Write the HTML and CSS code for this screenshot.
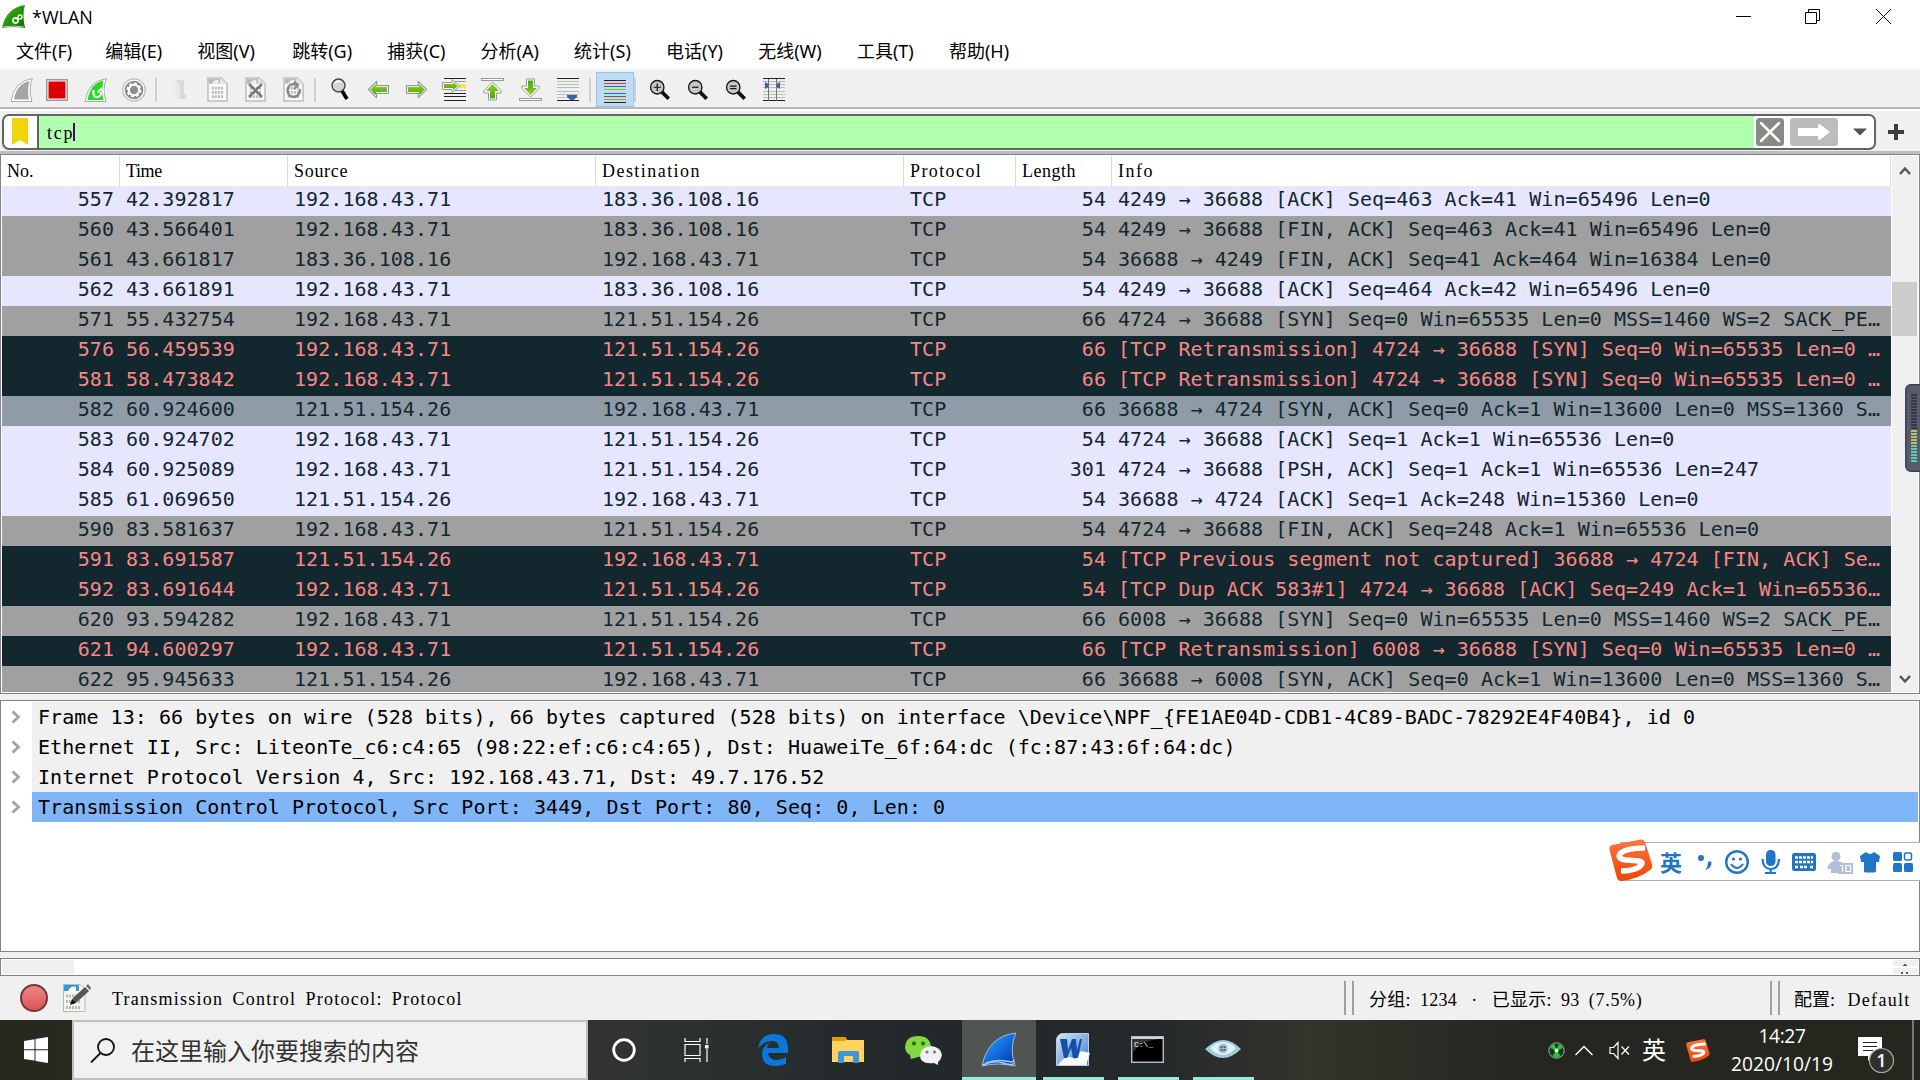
FILE: index.html
```html
<!DOCTYPE html>
<html lang="zh-CN">
<head>
<meta charset="utf-8">
<title>*WLAN</title>
<link rel="stylesheet" href="styles.css">
</head>
<body>
<svg class="defs" width="0" height="0" aria-hidden="true">
  <defs>
    <linearGradient id="green" x1="0" y1="0" x2="0" y2="1"><stop offset="0" stop-color="#8fd01f"/><stop offset="1" stop-color="#4fa60a"/></linearGradient>
    <linearGradient id="fin-green" x1="0" y1="0" x2="1" y2="1"><stop offset="0" stop-color="#3fc010"/><stop offset="1" stop-color="#0b6a0b"/></linearGradient>
    <linearGradient id="fin-blue" x1="0" y1="0" x2="1" y2="1"><stop offset="0" stop-color="#3aa0f8"/><stop offset=".5" stop-color="#1070e0"/><stop offset="1" stop-color="#0a2f9c"/></linearGradient>
    <linearGradient id="orange" x1="0" y1="0" x2="0" y2="1"><stop offset="0" stop-color="#ff7440"/><stop offset="1" stop-color="#ee4408"/></linearGradient>
    <linearGradient id="red" x1="0" y1="0" x2="0" y2="1"><stop offset="0" stop-color="#e98a8a"/><stop offset="1" stop-color="#e05050"/></linearGradient>
    <linearGradient id="word" x1="0" y1="0" x2="1" y2="1"><stop offset="0" stop-color="#d8e8fa"/><stop offset="1" stop-color="#3d78c8"/></linearGradient>
    <symbol id="arrow" viewBox="0 0 24 20"><path d="M1.500 10 L10 1.500 V6 H22.500 V14 H10 V18.500Z" fill="#fff" stroke="#999" stroke-width="1.300" stroke-linejoin="round"/><path d="M4 10 L8.800 5 V8 H20.500 V12 H8.800 V15Z" fill="url(#green)" stroke="url(#green)" stroke-width="1"/></symbol>
    <symbol id="doc" viewBox="0 0 22 26"><path d="M1 1H15L21 7V25H1Z" fill="#fafafa" stroke="#bdbdbd" stroke-width="1.600"/><path d="M2 2H14V7H2Z" fill="#b9b9b9"/><path d="M5 7Q8 2 12 3V7Z" fill="#eee"/><path d="M15 1V7H21Z" fill="#ddd"/><path d="M5 11.500H17M5 16H17M5 20.500H17" stroke="#bbb" stroke-width="3" stroke-dasharray="2.200 1"/></symbol>
    <symbol id="lens" viewBox="0 0 24 24"><path d="M14 14L21.500 21.500" stroke="#111" stroke-width="4"/><circle cx="9" cy="9" r="7.300" fill="#c6c6c6" stroke="#171717" stroke-width="1.500"/></symbol>
    <symbol id="sogou" viewBox="0 0 44 42"><path d="M3 6 L32 .5Q35 0 36 3L43 25Q44 29 41 31Q30 40 12 42Q9 42 8 39L.5 11Q0 7 3 6Z" fill="url(#orange)"/><path d="M36 9Q16 9 11 15Q8 20 17 21L30 22Q36 23 30 28Q24 32 12 32" fill="none" stroke="#fff" stroke-width="5.600"/></symbol>
    <symbol id="chev" viewBox="0 0 10 14"><path d="M1.500 1.500L7.500 7L1.500 12.500" fill="none" stroke="#a2a2a2" stroke-width="2.800"/></symbol>
  </defs>
</svg>

<header class="titlebar">
  <svg class="app-icon" width="24" height="24" viewBox="0 0 24 24"><path d="M0 23Q4 3 23 0Q20 9 23 23Q12 21 0 23Z" fill="url(#fin-green)"/><path d="M1 22Q12 20 22 22" stroke="#b7d8a8" fill="none"/><circle cx="13.500" cy="15.500" r="2.500" fill="none" stroke="#e4f5df" stroke-width="1.800"/><circle cx="18" cy="12" r="2" fill="none" stroke="#e4f5df" stroke-width="1.500"/></svg>
  <span class="title">*WLAN</span>
  <svg class="win-buttons" width="155" height="17" viewBox="0 0 155 17" fill="none" stroke="#000" stroke-width="1"><path d="M0 7.500H15"/><path d="M69.500 3.500H80.500V14.500H69.500ZM72.500 3V.5H83.500V11.500H81"/><path d="M140 0L155 15M155 0L140 15"/></svg>
</header>

<nav class="menubar">
  <span>文件(F)</span><span>编辑(E)</span><span>视图(V)</span><span>跳转(G)</span><span>捕获(C)</span><span>分析(A)</span><span>统计(S)</span><span>电话(Y)</span><span>无线(W)</span><span>工具(T)</span><span>帮助(H)</span>
</nav>

<div class="toolbar">
  <i class="tool"><svg class="fin" width="24" height="26" viewBox="0 0 24 26"><path d="M1 24.500Q4 4 22.500 1.500Q18 12 22 24.500Z" fill="#fff" stroke="#aaa"/><path d="M4 22.500Q6.500 7 19.500 4Q17 13 19 22.500Z" fill="#a5a5a5"/></svg></i>
  <i class="tool"><svg class="stop" width="22" height="22"><rect x=".75" y=".75" width="20.500" height="20.500" fill="#fff" stroke="#999" stroke-width="1.500"/><rect x="2.500" y="2.500" width="17" height="17" fill="#dc0000"/></svg></i>
  <i class="tool"><svg width="24" height="26" viewBox="0 0 24 26"><path d="M1 24.500Q4 4 22.500 1.500Q18 12 22 24.500Z" fill="#fff" stroke="#aaa"/><path d="M3.500 23Q6.500 6 19.500 3.500Q17 13 19.500 23Z" fill="#25dc1b"/><path d="M9.500 13V16Q9.500 20 13 20Q17 20 17 15M13.500 15.500L17 12L20 15.500" fill="none" stroke="#fff" stroke-width="2.200"/></svg></i>
  <i class="tool"><svg width="24" height="24" viewBox="0 0 24 24"><circle cx="12" cy="12" r="11.200" fill="#fff" stroke="#bbb" stroke-width="1.200"/><circle cx="12" cy="12" r="9.300" fill="#8d8d8d"/><circle cx="12" cy="12" r="5.200" fill="none" stroke="#fff" stroke-width="2"/><circle cx="12" cy="12" r="6.700" fill="none" stroke="#fff" stroke-width="1.600" stroke-dasharray="2.800 2.460"/></svg></i>
  <b class="sep"></b>
  <i class="tool"><svg width="16" height="22" viewBox="0 0 16 22"><path d="M1 1H7V21H1Z" fill="#ececec"/><path d="M5 1H13V15L15 16V20H9Z" fill="#d9d9d9"/><path d="M5 1L9 5V20L5 18Z" fill="#e8e8e8"/></svg></i>
  <i class="tool"><svg width="21" height="25"><use href="#doc"/></svg></i>
  <i class="tool"><svg width="21" height="25"><use href="#doc"/><path d="M4 7L17 20M17 7L4 20" stroke="#777" stroke-width="2.500"/></svg></i>
  <i class="tool"><svg width="21" height="25"><use href="#doc"/><path d="M14 8Q6 5 4.500 13Q5 20 11 20Q17 19 17 12M11 5L15 8L11 12" fill="none" stroke="#888" stroke-width="2.400"/></svg></i>
  <b class="sep"></b>
  <i class="tool gap"><svg width="18" height="23" viewBox="0 0 18 23"><path d="M10.500 12L16 21" stroke="#000" stroke-width="3.600"/><circle cx="7.500" cy="7.500" r="6.500" fill="#d5d5d5" stroke="#444" stroke-width="1.400"/><path d="M4 5Q7 2 10 4" stroke="#fff" fill="none" stroke-width="1.500"/></svg></i>
  <i class="tool"><svg width="23" height="19"><use href="#arrow"/></svg></i>
  <i class="tool"><svg class="flip" width="23" height="19"><use href="#arrow"/></svg></i>
  <i class="tool"><svg width="24" height="23" viewBox="0 0 24 23"><path d="M2 .5H24M2 15.500H24M2 18.500H24M2 22.500H24" stroke="#222"/><path d="M12 3.500H24M12 12.500H24" stroke="#999"/><path d="M17 6H24V10H17Z" fill="#ffe24a"/><path d="M.5 4.500H10V1.500L18 8L10 14.500V11.500H.5Z" fill="#fff" stroke="#999"/><path d="M2 6H11V4L16 8L11 12V10H2Z" fill="url(#green)"/></svg></i>
  <i class="tool"><svg width="23" height="23" viewBox="0 0 23 23"><rect x=".5" y=".5" width="22" height="2" fill="#fff" stroke="#999"/><path d="M11.500 4L20 12.500V15H15.500V22H7.500V15H3V12.500Z" fill="#fff" stroke="#999"/><path d="M11.500 6L18 13H14V20.500H9V13H5Z" fill="url(#green)"/></svg></i>
  <i class="tool"><svg class="vflip" width="23" height="23" viewBox="0 0 23 23"><rect x=".5" y=".5" width="22" height="2" fill="#fff" stroke="#999"/><path d="M11.500 4L20 12.500V15H15.500V22H7.500V15H3V12.500Z" fill="#fff" stroke="#999"/><path d="M11.500 6L18 13H14V20.500H9V13H5Z" fill="url(#green)"/></svg></i>
  <i class="tool"><svg width="22" height="23" viewBox="0 0 22 23"><path d="M0 .5H22M0 22.500H22" stroke="#222"/><path d="M0 3.500H22M0 6.500H22M0 9.500H22M0 13.500H22M0 16.500H22M0 19.500H22" stroke="#babdb6"/><path d="M10 17H20V19L16.500 22H13.500L10 19Z" fill="#3465a4"/></svg></i>
  <b class="sep wide"></b>
  <i class="tool checked"><svg width="22" height="23" viewBox="0 0 22 23" shape-rendering="crispEdges"><path d="M0 .5H22M0 22.500H22" stroke="#222"/><path d="M0 3.500H22" stroke="#ef2929"/><path d="M0 6.500H22M0 13.500H22" stroke="#3465a4"/><path d="M0 9.500H22" stroke="#73d216"/><path d="M0 16.500H22" stroke="#75507b"/><path d="M0 19.500H22" stroke="#c4a000"/></svg></i>
  <b class="sep last"></b>
  <i class="tool"><svg width="22" height="22" viewBox="0 0 24 24"><use href="#lens"/><path d="M5 9H13M9 5V13" stroke="#111" stroke-width="1.300"/></svg></i>
  <i class="tool"><svg width="22" height="22" viewBox="0 0 24 24"><use href="#lens"/><path d="M5.500 9H12.500" stroke="#111" stroke-width="1.300"/></svg></i>
  <i class="tool"><svg width="22" height="22" viewBox="0 0 24 24"><use href="#lens"/><path d="M5.500 7.800H12.500M5.500 10.500H12.500" stroke="#111" stroke-width="1.200"/></svg></i>
  <i class="tool"><svg width="22" height="23" viewBox="0 0 22 23"><path d="M0 .5H22M0 22.500H22" stroke="#222"/><path d="M0 3.500H22M0 6.500H22M0 9.500H22M0 13.500H22M0 16.500H22M0 19.500H22" stroke="#babdb6"/><path d="M5.500 1V23M13.500 1V23" stroke="#777"/><path d="M2 4L5.500 6V9L2 11ZM17 4L13.500 6V9L17 11Z" fill="#3465a4"/></svg></i>
</div>

<div class="filterbar">
  <div class="filterbox">
    <div class="bookmark"><svg width="16" height="28"><path d="M0 1Q0 0 1 0H15Q16 0 16 1V27L8 22L0 27Z" fill="#efd509"/></svg></div>
    <div class="filter-input"><span class="serif tcp">tcp</span><span class="caret"></span></div>
    <svg class="fbtn" width="28" height="28"><rect width="28" height="28" rx="3.500" fill="#888a85"/><path d="M5 5L23 23M23 5L5 23" stroke="#fff" stroke-width="2.500" stroke-linecap="round"/></svg>
    <svg class="fbtn apply" width="48" height="28"><rect width="48" height="28" rx="3.500" fill="#bcbcbc"/><path d="M9 10H28V7Q29 5 31 7L40 14L31 21Q29 23 28 21V18H9Q8 18 8 17V11Q8 10 9 10Z" fill="#fff"/></svg>
    <svg class="drop" width="14" height="8"><path d="M0 .5H14L7 7.500Z" fill="#555"/></svg>
  </div>
  <svg class="plus" width="16" height="16"><path d="M8 0V16M0 8H16" stroke="#3d3d3d" stroke-width="4"/></svg>
</div>

<section class="packets">
  <div class="list">
    <div class="row head serif"><span class="h3">No.</span><span class="h4">Time</span><span class="h6">Source</span><span class="h11">Destination</span><span class="h8">Protocol</span><span class="hl">Length</span><span class="hi">Info</span></div>
    <div class="row tcp-row"><span>557</span><span>42.392817</span><span>192.168.43.71</span><span>183.36.108.16</span><span>TCP</span><span>54</span><span>4249 → 36688 [ACK] Seq=463 Ack=41 Win=65496 Len=0</span></div>
    <div class="row syn"><span>560</span><span>43.566401</span><span>192.168.43.71</span><span>183.36.108.16</span><span>TCP</span><span>54</span><span>4249 → 36688 [FIN, ACK] Seq=463 Ack=41 Win=65496 Len=0</span></div>
    <div class="row syn"><span>561</span><span>43.661817</span><span>183.36.108.16</span><span>192.168.43.71</span><span>TCP</span><span>54</span><span>36688 → 4249 [FIN, ACK] Seq=41 Ack=464 Win=16384 Len=0</span></div>
    <div class="row tcp-row"><span>562</span><span>43.661891</span><span>192.168.43.71</span><span>183.36.108.16</span><span>TCP</span><span>54</span><span>4249 → 36688 [ACK] Seq=464 Ack=42 Win=65496 Len=0</span></div>
    <div class="row syn"><span>571</span><span>55.432754</span><span>192.168.43.71</span><span>121.51.154.26</span><span>TCP</span><span>66</span><span>4724 → 36688 [SYN] Seq=0 Win=65535 Len=0 MSS=1460 WS=2 SACK_PE…</span></div>
    <div class="row bad"><span>576</span><span>56.459539</span><span>192.168.43.71</span><span>121.51.154.26</span><span>TCP</span><span>66</span><span>[TCP Retransmission] 4724 → 36688 [SYN] Seq=0 Win=65535 Len=0 …</span></div>
    <div class="row bad"><span>581</span><span>58.473842</span><span>192.168.43.71</span><span>121.51.154.26</span><span>TCP</span><span>66</span><span>[TCP Retransmission] 4724 → 36688 [SYN] Seq=0 Win=65535 Len=0 …</span></div>
    <div class="row hover"><span>582</span><span>60.924600</span><span>121.51.154.26</span><span>192.168.43.71</span><span>TCP</span><span>66</span><span>36688 → 4724 [SYN, ACK] Seq=0 Ack=1 Win=13600 Len=0 MSS=1360 S…</span></div>
    <div class="row tcp-row"><span>583</span><span>60.924702</span><span>192.168.43.71</span><span>121.51.154.26</span><span>TCP</span><span>54</span><span>4724 → 36688 [ACK] Seq=1 Ack=1 Win=65536 Len=0</span></div>
    <div class="row tcp-row"><span>584</span><span>60.925089</span><span>192.168.43.71</span><span>121.51.154.26</span><span>TCP</span><span>301</span><span>4724 → 36688 [PSH, ACK] Seq=1 Ack=1 Win=65536 Len=247</span></div>
    <div class="row tcp-row"><span>585</span><span>61.069650</span><span>121.51.154.26</span><span>192.168.43.71</span><span>TCP</span><span>54</span><span>36688 → 4724 [ACK] Seq=1 Ack=248 Win=15360 Len=0</span></div>
    <div class="row syn"><span>590</span><span>83.581637</span><span>192.168.43.71</span><span>121.51.154.26</span><span>TCP</span><span>54</span><span>4724 → 36688 [FIN, ACK] Seq=248 Ack=1 Win=65536 Len=0</span></div>
    <div class="row bad"><span>591</span><span>83.691587</span><span>121.51.154.26</span><span>192.168.43.71</span><span>TCP</span><span>54</span><span>[TCP Previous segment not captured] 36688 → 4724 [FIN, ACK] Se…</span></div>
    <div class="row bad"><span>592</span><span>83.691644</span><span>192.168.43.71</span><span>121.51.154.26</span><span>TCP</span><span>54</span><span>[TCP Dup ACK 583#1] 4724 → 36688 [ACK] Seq=249 Ack=1 Win=65536…</span></div>
    <div class="row syn"><span>620</span><span>93.594282</span><span>192.168.43.71</span><span>121.51.154.26</span><span>TCP</span><span>66</span><span>6008 → 36688 [SYN] Seq=0 Win=65535 Len=0 MSS=1460 WS=2 SACK_PE…</span></div>
    <div class="row bad"><span>621</span><span>94.600297</span><span>192.168.43.71</span><span>121.51.154.26</span><span>TCP</span><span>66</span><span>[TCP Retransmission] 6008 → 36688 [SYN] Seq=0 Win=65535 Len=0 …</span></div>
    <div class="row syn"><span>622</span><span>95.945633</span><span>121.51.154.26</span><span>192.168.43.71</span><span>TCP</span><span>66</span><span>36688 → 6008 [SYN, ACK] Seq=0 Ack=1 Win=13600 Len=0 MSS=1360 S…</span></div>
  </div>
  <div class="scrollbar">
    <svg width="12" height="9"><path d="M1 8L6 2.500L11 8" fill="none" stroke="#555" stroke-width="2.500"/></svg>
    <div class="thumb"></div>
    <svg class="down" width="12" height="9"><path d="M1 1L6 6.500L11 1" fill="none" stroke="#555" stroke-width="2.500"/></svg>
  </div>
</section>

<section class="details">
  <div class="node"><i><svg width="10" height="14"><use href="#chev"/></svg></i><span>Frame 13: 66 bytes on wire (528 bits), 66 bytes captured (528 bits) on interface \Device\NPF_{FE1AE04D-CDB1-4C89-BADC-78292E4F40B4}, id 0</span></div>
  <div class="node"><i><svg width="10" height="14"><use href="#chev"/></svg></i><span>Ethernet II, Src: LiteonTe_c6:c4:65 (98:22:ef:c6:c4:65), Dst: HuaweiTe_6f:64:dc (fc:87:43:6f:64:dc)</span></div>
  <div class="node"><i><svg width="10" height="14"><use href="#chev"/></svg></i><span>Internet Protocol Version 4, Src: 192.168.43.71, Dst: 49.7.176.52</span></div>
  <div class="node selected"><i><svg width="10" height="14"><use href="#chev"/></svg></i><span>Transmission Control Protocol, Src Port: 3449, Dst Port: 80, Seq: 0, Len: 0</span></div>
</section>

<section class="bytes"><div class="offset"></div><svg width="25" height="14"><path d="M0 0H25V6H0ZM0 8H25V14H0Z" fill="#efefef"/><path d="M10 6V5H11V4H13V5H14V6ZM8 12H10V14H8ZM13 12H15V14H13Z" fill="#555"/></svg></section>

<footer class="statusbar">
  <svg class="expert" width="28" height="28"><circle cx="14" cy="14" r="13" fill="url(#red)" stroke="#74393c" stroke-width="2"/></svg>
  <svg class="comment" width="28" height="28" viewBox="0 0 28 28"><path d="M.5.5H17L22 5V27.500H.5Z" fill="#f5f5ee" stroke="#b9b9a9"/><path d="M1 1H16V7H1Z" fill="#2b9bd8"/><path d="M5 7Q8 1 13 3V7Z" fill="#fff"/><path d="M3 12H18M3 17.500H18M3 23.500H18" stroke="#b7b7ae" stroke-width="3" stroke-dasharray="2 1"/><path d="M8 20L10 14L22 3L26 7L14 18Z" fill="#555"/><path d="M23 2L25 0L28 4L27 6Z" fill="#666"/><path d="M7 21L9 15L13 19Z" fill="#111"/></svg>
  <span class="serif status-text">Transmission Control Protocol: Protocol</span>
  <b class="grip"></b>
  <span class="serif packets-count">分组: <em>1234</em> <em class="dot">·</em> 已显示: <em>93</em> <em class="pct">(7.5%)</em></span>
  <b class="grip"></b>
  <span class="serif profile">配置: <em>Default</em></span>
</footer>

<footer class="taskbar">
  <div class="start"><svg width="24" height="26" viewBox="0 0 24 26" fill="#fff"><path d="M0 4L10.500 2.300V12.300H0ZM11.500 2L24 0V12.300H11.500ZM0 13.300H10.500V23.500L0 22ZM11.500 13.300H24V26L11.500 24Z"/></svg></div>
  <div class="search"><svg width="25" height="25" viewBox="0 0 25 25" fill="none" stroke="#111" stroke-width="1.800"><circle cx="16" cy="9" r="8"/><path d="M10.500 15L1 24.500"/></svg><span>在这里输入你要搜索的内容</span></div>
  <div class="task cortana"><svg width="24" height="24"><circle cx="12" cy="12" r="10.300" fill="none" stroke="#fff" stroke-width="2.800"/></svg></div>
  <div class="task view"><svg width="26" height="24" fill="none" stroke="#fff" stroke-width="1.200"><path d="M1 0V3.500H16V0M1 24V20.500H16V24M1 6.500H16V17.500H1ZM23 0V6M23 11V24"/><path d="M21 7H24.500V10.500H21Z" fill="#fff" stroke="none"/></svg></div>
  <div class="task edge"><svg width="32" height="34" viewBox="0 0 32 34"><path d="M1 16Q3 1 17 1Q31 1 31 16V20H11Q12 27 20 27Q25 27 29 24V31Q24 33 18 33Q5 33 5 21Q5 14 13 9Q10 12 10 15H22Q22 8 15 8Q6 8 1 16Z" fill="#0a78d7"/></svg></div>
  <div class="task explorer"><svg width="32" height="28" viewBox="0 0 32 28"><path d="M0 1H13L15 4H32V26H0Z" fill="#ffd262"/><path d="M0 1H13L15 3L13 5H0Z" fill="#df9c05"/><path d="M6 27V17Q6 15 8 15H25Q27 15 27 17V27H21V20H12V27Z" fill="#3b96dc"/></svg></div>
  <div class="task wechat"><svg width="38" height="30" viewBox="0 0 38 30"><path d="M13 1Q25 1 26 12Q25 21 13 22L6 24L5 20Q0 17 0 12Q1 1 13 1Z" fill="#83d93f"/><circle cx="9" cy="8.500" r="2" fill="#147115"/><circle cx="18" cy="8.500" r="2" fill="#147115"/><path d="M26 11Q36 12 37 20Q36 25 33 27V30L29 28Q15 30 15 20Q16 12 26 11Z" fill="#eef0f1"/><circle cx="22" cy="17" r="1.500" fill="#777"/><circle cx="29.500" cy="17" r="1.500" fill="#777"/></svg></div>
  <div class="task app active"><svg width="36" height="36" viewBox="0 0 36 36"><path d="M1 34Q7 4 35 1Q28 15 34 34Q16 30 1 34Z" fill="url(#fin-blue)" stroke="#aab9cf" stroke-width="1"/><path d="M2 33Q12 28 22 31T33 31M5 31Q15 27 24 29T33 28" stroke="#a9cbf5" fill="none" stroke-width="1.400"/></svg></div>
  <div class="task app word"><svg width="35" height="34" viewBox="0 0 35 34"><path d="M.5 6Q2 .5 7 .5H32.500V32.500H.5Z" fill="url(#word)" stroke="#b8cdec"/><path d="M2 32Q10 20 19 26L25 18L34 20L31 29V32Z" fill="#f7f9fc"/><path d="M4 6H11L12 17L16 6H20L21 17L24 6H26L22 25H17L15 15L11 25H8Z" fill="#1450aa"/></svg></div>
  <div class="task app cmd"><svg width="33" height="27" viewBox="0 0 33 27"><rect x=".7" y=".7" width="31.600" height="25.600" fill="#000" stroke="#b6bcc2" stroke-width="1.500"/><path d="M1 1H32V3H1Z" fill="#cfd6de"/><path d="M1.500 3H28Q12 4 2 16Z" fill="#333"/><text x="3" y="11">C:\_</text></svg></div>
  <div class="task app eye"><svg width="36" height="19" viewBox="0 0 36 19"><path d="M0 9Q10 0 18 0Q27 0 36 9Q27 18 18 18Q9 18 0 9Z" fill="#9ccbdd"/><path d="M5 8Q11 2 18 2Q26 2 31 8Q25 15 18 15Q11 15 5 8Z" fill="#e4f2f5"/><circle cx="18" cy="8.500" r="5" fill="#a9cbd6"/><circle cx="18" cy="8.500" r="3" fill="#476876"/><path d="M18 3V14M12.500 8.500H23.500" stroke="#b7d3dc" stroke-width=".8"/></svg></div>
  <div class="tray">
    <svg class="t-green" width="17" height="17" viewBox="0 0 17 17"><circle cx="8.500" cy="8.500" r="7.700" fill="#123c17" stroke="#a5ada5"/><path d="M8.500 8.500L2.200 6Q4 2 6.500 2ZM8.500 8.500L10.500 2Q14 3 15 6ZM8.500 8.500L12.500 14Q8.500 17 4.500 14Z" fill="#22c83c"/><circle cx="8.500" cy="8.500" r="2" fill="#fff"/></svg>
    <svg class="t-up" width="18" height="11" fill="none" stroke="#fff" stroke-width="1.500"><path d="M.5 10L9 1.500L17.500 10"/></svg>
    <svg class="t-vol" width="21" height="19" fill="none" stroke="#fff" stroke-width="1.200"><path d="M1 6.500H4.500L9 1.500V17.500L4.500 12.500H1ZM12.500 5.500L20 13.500M20 5.500L12.500 13.500"/></svg>
    <span class="t-lang">英</span>
    <svg class="t-sogou" width="24" height="23"><use href="#sogou"/></svg>
    <div class="clock"><span>14:27</span><span>2020/10/19</span></div>
    <svg class="t-note" width="38" height="38" viewBox="0 0 38 38"><path d="M1 1H25V20H16L11 25V20H1Z" fill="#fff"/><path d="M6 6.500H20M6 10.500H20M6 14.500H16" stroke="#222" stroke-width="1.200"/><circle cx="24.500" cy="24.500" r="12" fill="#30312e" stroke="#aaa" stroke-width="1.200"/><text x="24.500" y="31" text-anchor="middle">1</text></svg>
    <b class="peek"></b>
  </div>
</footer>

<aside class="ime">
  <svg class="ime-logo" width="44" height="42"><use href="#sogou"/></svg>
  <span class="ime-lang">英</span>
  <svg width="300" height="37" viewBox="1620 843 300 37" fill="#2075c7" class="ime-icons">
    <circle cx="1701" cy="858" r="3"/><path d="M1708 862Q1712 860 1711.500 864Q1710 869 1705 870Q1708 867 1708 862Z"/>
    <circle cx="1737" cy="862" r="10.800" fill="none" stroke="#2075c7" stroke-width="2.400"/><circle cx="1733.500" cy="859" r="1.600"/><circle cx="1740.500" cy="859" r="1.600"/><path d="M1731 864Q1737 872 1743 864" fill="none" stroke="#2075c7" stroke-width="2"/>
    <rect x="1766" y="850" width="9.500" height="16" rx="4.500"/><path d="M1762.500 859Q1763 869 1770.700 869Q1778.500 869 1779 859M1770.700 869V872M1765 873H1776" fill="none" stroke="#2075c7" stroke-width="2.200"/>
    <rect x="1792" y="853" width="24" height="18" rx="2.500"/><path d="M1795 857.500H1813M1795 862H1813M1795 867H1798M1800 867H1808M1810 867H1813" stroke="#fff" stroke-width="2.500" stroke-dasharray="3 1"/>
    <g fill="#b1bfd6"><circle cx="1836" cy="856.500" r="4.500"/><path d="M1827 869Q1829 861 1836 861Q1842 861 1843 864H1838V873H1831V869Z"/><path d="M1838 863H1853V874H1838Z"/></g><path d="M1840 865.500H1842.500V872M1846 865.500H1850.500V871.500H1846Z" stroke="#fff" stroke-width="1.200" fill="none"/>
    <path d="M1866 852L1860 856L1861 862H1864V871Q1864 872.500 1866 872.500H1874Q1876 872.500 1876 871V862H1879L1880 856L1874 852Q1870 856 1866 852Z"/>
    <rect x="1893" y="852" width="9" height="9" rx="1.500"/><rect x="1904.500" y="853" width="7" height="7" rx="1.500" fill="none" stroke="#2075c7" stroke-width="1.500"/><rect x="1893" y="863" width="9" height="9" rx="1.500"/><rect x="1904" y="863" width="9" height="9" rx="1.500"/>
  </svg>
</aside>

<svg class="meter" width="15" height="88"><rect x=".8" y=".8" width="24" height="86.400" rx="5" fill="#575b6b" stroke="#3c404e" stroke-width="1.500"/><path d="M9 10V46" stroke="#343846" stroke-width="6" stroke-dasharray="2 1"/><path d="M9 46V61" stroke="#b3c36b" stroke-width="6" stroke-dasharray="2 1"/><path d="M9 61V78" stroke="#61c9ac" stroke-width="6" stroke-dasharray="2 1"/></svg>
</body>
</html>
```
FILE: styles.css
```css
* { box-sizing: border-box; }
body {
  margin: 0;
  width: 1920px;
  height: 1080px;
  overflow: hidden;
  position: relative;
  display: flex;
  flex-direction: column;
  background: #f0f0f0;
  color: #000;
  font-family: "Open Sans", "Noto Sans CJK SC", sans-serif;
}
body > * { flex-shrink: 0; }
svg { display: block; flex-shrink: 0; }
.defs { position: absolute; }
.serif { font-family: "Liberation Serif", "Noto Sans CJK SC", serif; font-size: 18px; }
em { font-style: normal; }

/* title and menu */
.titlebar { height: 34px; background: #fff; display: flex; align-items: flex-start; padding: 5px 0 0 2px; }
.title { font-size: 18px; line-height: 24px; margin-left: 6px; }
.win-buttons { margin: 4px 29px 0 auto; overflow: visible; }
.menubar { height: 37px; background: #fff; border-bottom: 2px solid #f2f2f2; display: flex; gap: 35.200px; padding-left: 16px; font-family: "Noto Sans", "Noto Sans CJK SC", sans-serif; font-size: 18px; line-height: 35px; white-space: nowrap; }
.menubar span:first-child { margin-right: -2px; }
.menubar span:nth-child(3) { margin-right: 2px; }

/* toolbar */
.toolbar { height: 38px; border-bottom: 2px solid #b8b8b8; display: flex; align-items: center; padding: 1px 0 0 1px; }
.tool { width: 38px; height: 35px; display: flex; align-items: center; justify-content: center; flex-shrink: 0; }
.tool.gap { margin-left: 2px; }
.fin { margin-left: 4px; }
.stop { margin-right: 3px; }
.flip { transform: scaleX(-1); }
.vflip { transform: scaleY(-1); }
.checked { background: #c0dcf3; border: 1px solid #90c8f6; padding: 4px 0 0; }
.sep { width: 7px; height: 24px; border-left: 2px solid #cfcfcf; margin-left: 2px; margin-right: -2px; }
.sep.wide { width: 7px; margin-left: 2px; margin-right: 0; }
.sep.last { width: 7px; margin: 0; }

/* display filter */
.filterbar { height: 45px; border-top: 2px solid #fff; border-bottom: 3px solid #bcbcbc; display: flex; padding: 3px 0 0 2px; align-items: flex-start; }
.filterbox { width: 1874px; height: 36px; border: 2px solid #646466; border-radius: 7px; background: #fff; display: flex; align-items: center; overflow: hidden; }
.bookmark { width: 35px; height: 32px; border-right: 2px solid #646466; padding: 2px 0 0 8px; }
.filter-input { width: 1715px; height: 32px; background: #afffaf; display: flex; align-items: center; padding-left: 8px; }
.tcp { letter-spacing: 1.700px; margin-top: 2px; }
.caret { width: 2px; height: 18px; background: #500050; margin-left: -1px; }
.fbtn { margin-left: 2px; }
.apply { margin-left: 6px; }
.drop { margin-left: 15px; }
.plus { margin: 10px 0 0 12px; }

/* packet list */
.packets { height: 540px; border: 1px solid #82828c; display: flex; padding: 1px; background: #fff; }
.list { width: 1890px; overflow: hidden; }
.row {
  display: grid;
  grid-template-columns: 117px 168px 308px 308px 112px 96px 1fr;
  height: 30px;
  line-height: 26px;
  white-space: pre;
}
.row, .node { font-family: "DejaVu Sans Mono", monospace; font-size: 20px; letter-spacing: .055px; }
.row > span { padding-left: 7px; }
.row:not(.head) > span:nth-child(1), .row:not(.head) > span:nth-child(6) { text-align: right; padding: 0 5px 0 0; }
.row.head { font-family: "Liberation Serif", serif; font-size: 18px; line-height: 31px; grid-template-columns: 118px 168px 308px 308px 112px 96px 1fr; }
.head > span { border-right: 1px solid #dcdcdc; padding-left: 6px; }
.head .h3 { letter-spacing: 0; padding-left: 5px; }
.head .h4 { letter-spacing: -.4px; }
.head .h6 { letter-spacing: .7px; }
.head .h11 { letter-spacing: 1.450px; }
.head .h8 { letter-spacing: 1.400px; }
.head .hl { letter-spacing: .5px; }
.head .hi { letter-spacing: 1.500px; }
.tcp-row { background: #e7e6ff; color: #12272e; }
.syn { background: #a0a0a0; color: #12272e; }
.bad { background: #12272e; color: #f78787; }
.hover { background: #8f9ca8; color: #12272e; }
.scrollbar { width: 26px; margin-left: 1px; background: #f0f0f0; display: flex; flex-direction: column; align-items: center; padding: 10px 1px 8px 0; }
.thumb { width: 25px; height: 54px; background: #cdcdcd; margin-top: 107px; }
.down { margin-top: auto; }

/* packet details */
.details { margin-top: 6px; height: 252px; border: 1px solid #82828c; background: #fff; padding: 1px; }
.node { display: flex; height: 30px; line-height: 30px; white-space: pre; }
.node i { width: 30px; display: flex; align-items: center; padding-left: 9px; }
.node span { flex: 1; background: #f0f0f0; padding-left: 6px; }
.node.selected span { background: #80b6f8; }
.bytes { margin-top: 6px; height: 18px; border: 1px solid #82828c; background: #fff; display: flex; justify-content: space-between; padding: 1px; }
.offset { width: 72px; background: #f0f0f0; }

/* status bar */
.statusbar { height: 44px; display: flex; align-items: center; padding-left: 20px; white-space: pre; }
.statusbar .comment { margin-left: 15px; }
.status-text { width: 1232px; margin: 2px 0 0 21px; letter-spacing: 1.250px; word-spacing: 3.400px; }
.grip { width: 10px; height: 34px; border: solid #a0a0a0; border-width: 0 2px; }
.packets-count { width: 401px; margin-left: 15px; word-spacing: 4.500px; letter-spacing: .25px; }
.dot { margin: 0 5px; }
.pct { letter-spacing: .7px; }
.profile { margin-left: 14px; word-spacing: 8px; }
.profile em { letter-spacing: 1.300px; }

/* taskbar */
.taskbar { height: 60px; display: flex; background: linear-gradient(90deg, #27271e 0, #303332 32%, #22282b 47%, #24292b 60%, #34332c 68%, #24261f 80%, #25271f 100%); }
.start { width: 72px; display: flex; align-items: center; padding-left: 24px; }
.search { width: 516px; background: #f1f1f1; border: 2px solid #bfbfbf; display: flex; align-items: center; padding-left: 16px; gap: 16px; font-family: "Noto Sans CJK SC", sans-serif; font-size: 24px; color: #333; white-space: nowrap; }
.search span { margin-top: -1px; }
.task { width: 74px; display: flex; align-items: center; justify-content: center; flex-shrink: 0; }
.task.cortana { padding-right: 2px; }
.task.view { width: 70px; padding-right: 1px; }
.task.edge { width: 78px; padding-left: 4px; }
.task.explorer { width: 70px; padding-left: 5px; }
.task.wechat { width: 82px; padding-left: 5px; }
.app { border-bottom: 3px solid #92ebdc; padding-top: 2px; }
.active { background: #505453; margin-right: 7px; }
.word, .cmd, .eye { width: 61px; margin-right: 14px; }
.cmd, .eye { padding-right: 2px; }
.cmd text { fill: #fff; font: 8px "Liberation Mono", monospace; }
.tray { margin-left: auto; width: 372px; display: flex; align-items: center; color: #fff; }
.t-up { margin-left: 10px; }
.t-vol { margin-left: 16px; }
.t-lang { font-size: 24px; line-height: 30px; margin-left: 12px; width: 25px; white-space: nowrap; }
.t-sogou { margin-left: 19px; }
.clock { width: 108px; margin-left: 18px; display: flex; flex-direction: column; text-align: center; font-size: 19.200px; line-height: 28px; white-space: nowrap; }
.clock span:first-child { letter-spacing: -.4px; }
.t-note { margin: 10px 0 0 21px; }
.t-note text { fill: #fff; font: 600 18px "Open Sans", sans-serif; }
.peek { width: 2px; height: 60px; background: #777; margin-left: auto; margin-right: 6px; }

/* floating widgets */
.ime { position: absolute; left: 1620px; top: 842px; width: 300px; height: 39px; background: #fff; border: solid #adadb5; border-width: 1px 0; }
.ime-logo { position: absolute; left: -11px; top: -4px; }
.ime-lang { position: absolute; left: 40px; top: 2px; color: #2075c7; font: bold 22px/32px "Noto Sans CJK SC", sans-serif; }
.meter { position: absolute; left: 1905px; top: 384px; }
```
